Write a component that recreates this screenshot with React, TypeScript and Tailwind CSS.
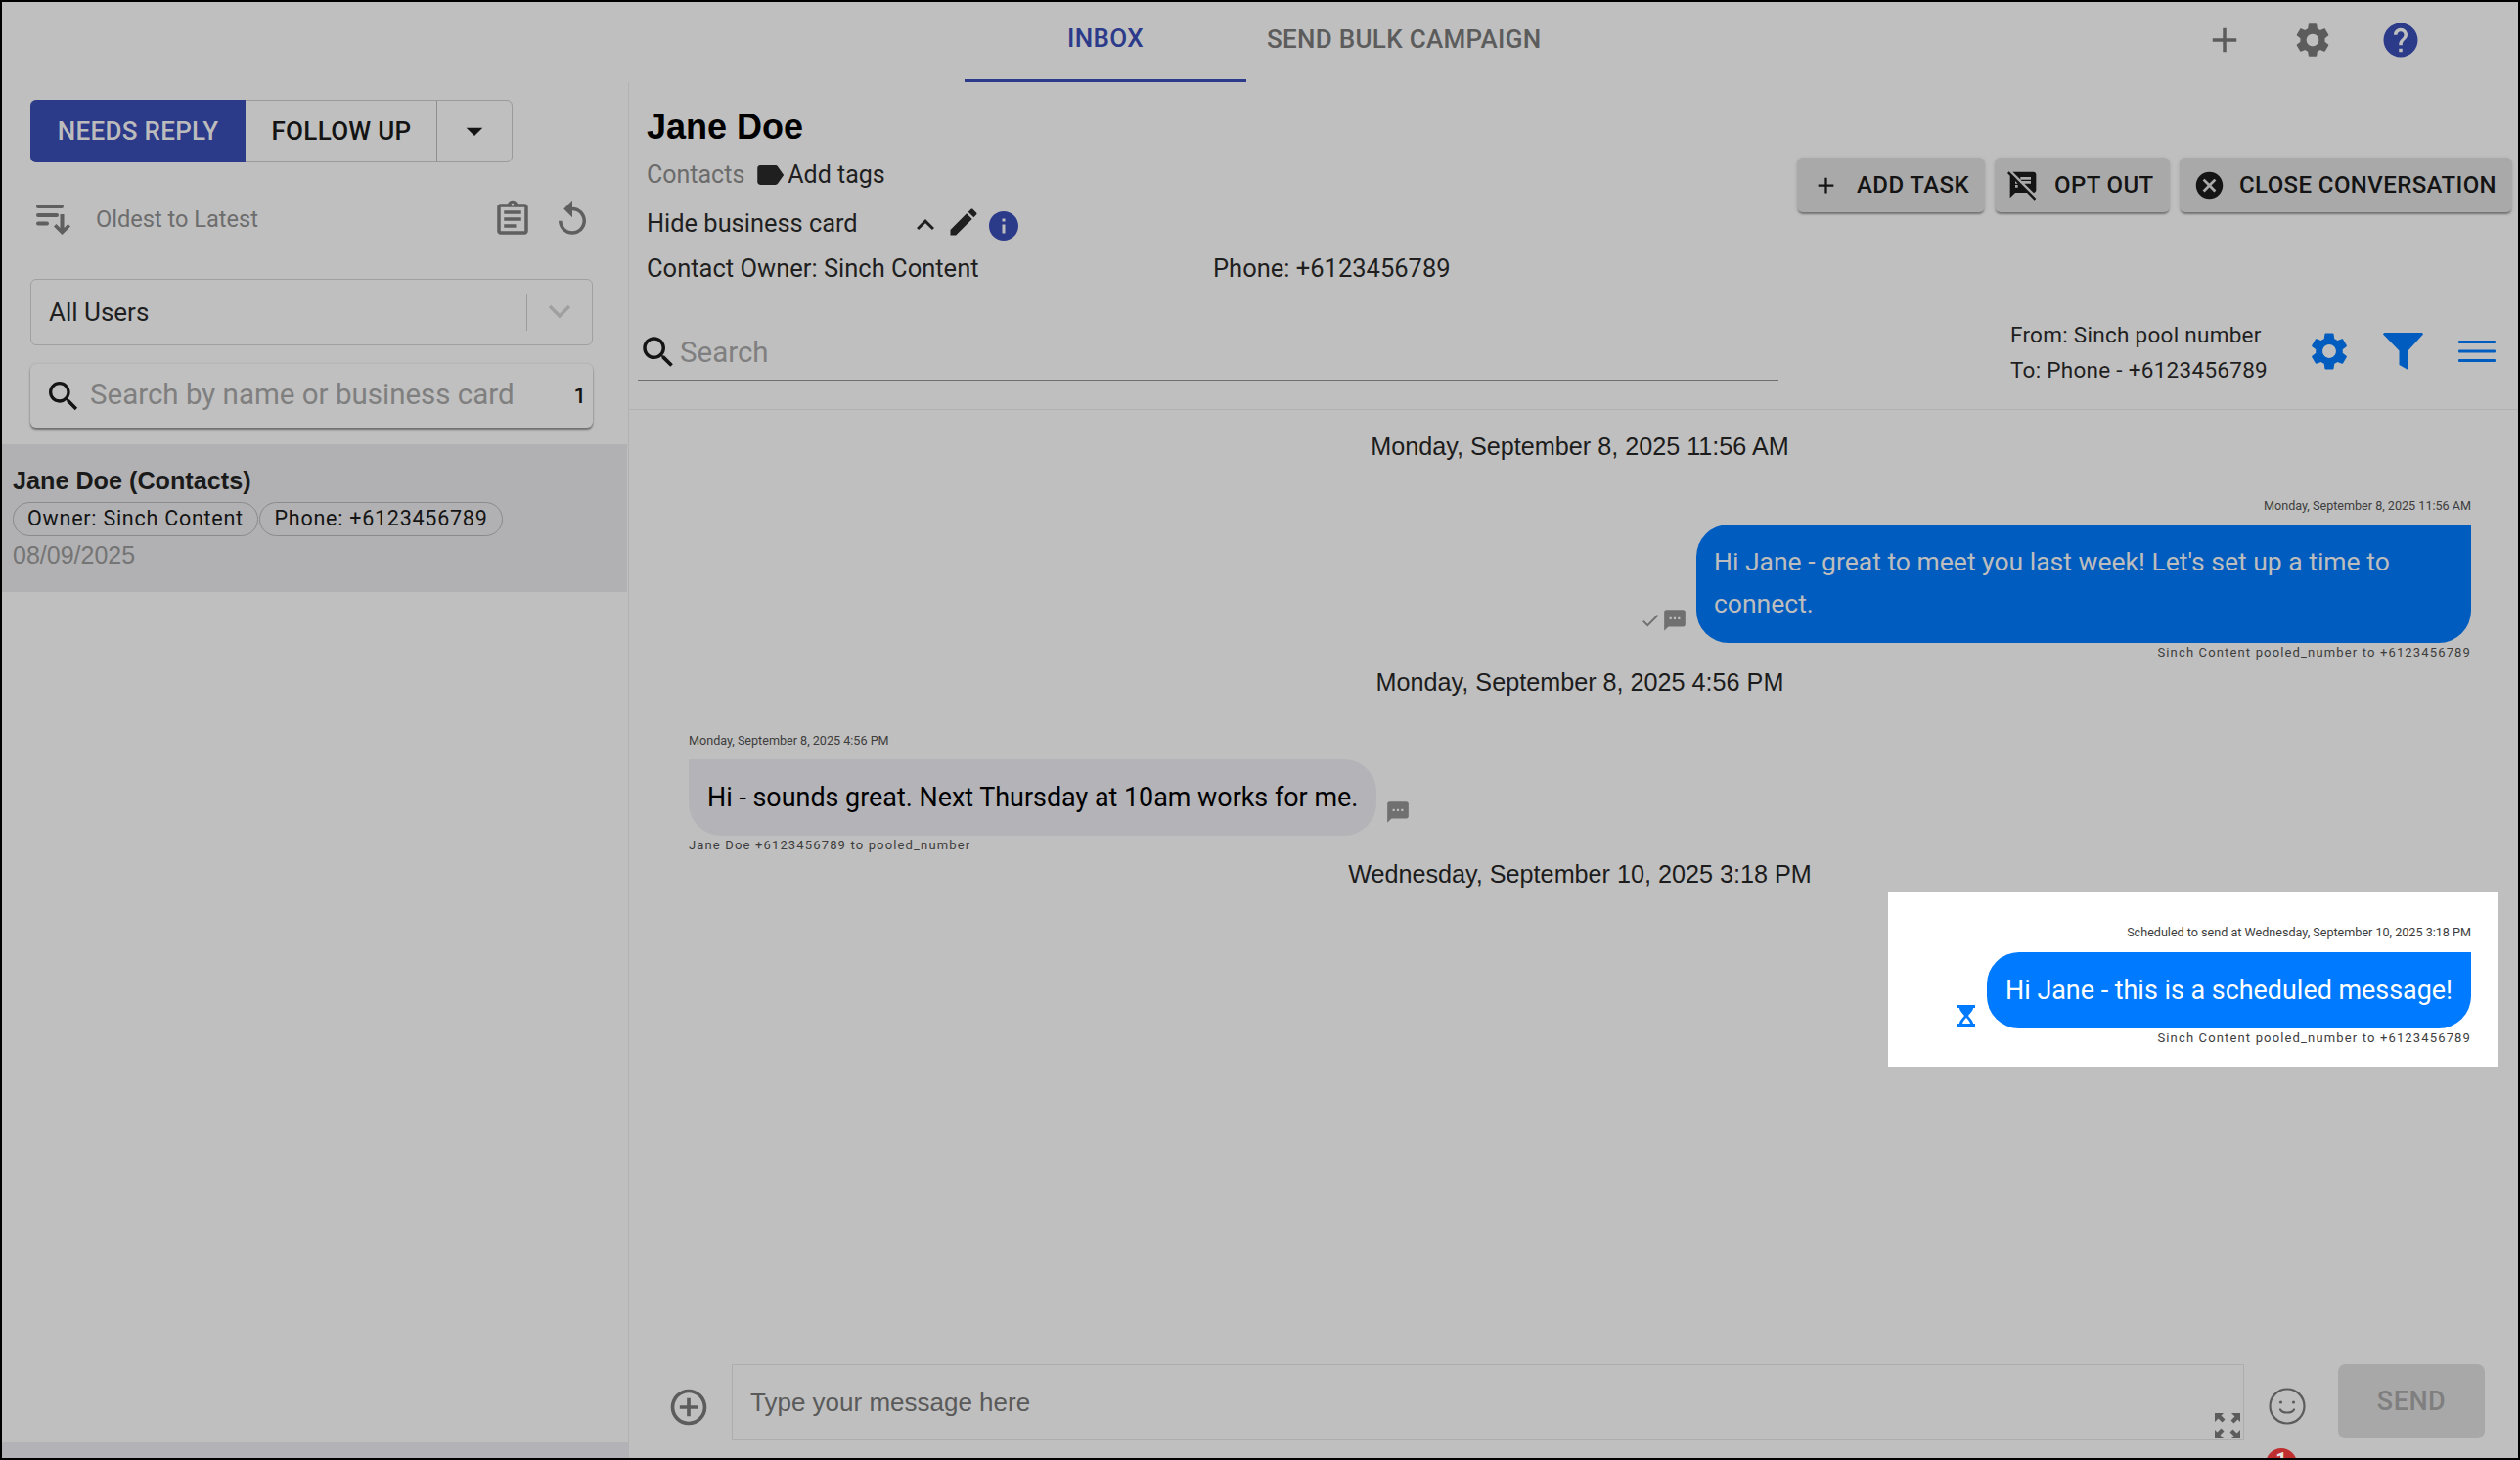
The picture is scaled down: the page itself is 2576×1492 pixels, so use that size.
import type { ReactNode } from "react";

const SANS = "font-['Liberation_Sans',Arial,sans-serif]";

const GEAR =
  "M19.14 12.94c.04-.3.06-.61.06-.94 0-.32-.02-.64-.07-.94l2.03-1.58c.18-.14.23-.41.12-.61l-1.92-3.32c-.12-.22-.37-.29-.59-.22l-2.39.96c-.5-.38-1.03-.7-1.62-.94l-.36-2.54c-.04-.24-.24-.41-.48-.41h-3.84c-.24 0-.43.17-.47.41l-.36 2.54c-.59.24-1.13.57-1.62.94l-2.39-.96c-.22-.08-.47 0-.59.22L2.74 8.87c-.12.21-.08.47.12.61l2.03 1.58c-.05.3-.09.63-.09.94s.02.64.07.94l-2.03 1.58c-.18.14-.23.41-.12.61l1.92 3.32c.12.22.37.29.59.22l2.39-.96c.5.38 1.03.7 1.62.94l.36 2.54c.05.24.24.41.48.41h3.84c.24 0 .44-.17.47-.41l.36-2.54c.59-.24 1.13-.56 1.62-.94l2.39.96c.22.08.47 0 .59-.22l1.92-3.32c.12-.22.07-.47-.12-.61l-2.01-1.58zM12 15.6c-1.98 0-3.6-1.62-3.6-3.6s1.62-3.6 3.6-3.6 3.6 1.62 3.6 3.6-1.62 3.6-3.6 3.6z";
const SEARCH =
  "M15.5 14h-.79l-.28-.27C15.41 12.59 16 11.11 16 9.5 16 5.91 13.09 3 9.5 3S3 5.91 3 9.5 5.91 16 9.5 16c1.61 0 3.09-.59 4.23-1.57l.27.28v.79l5 4.99L20.49 19l-4.99-5zm-6 0C7.01 14 5 11.99 5 9.5S7.01 5 9.5 5 14 7.01 14 9.5 11.99 14 9.5 14z";
const COMMENT =
  "M20 2H4c-1.1 0-2 .9-2 2v18l4-4h14c1.1 0 2-.9 2-2V4c0-1.1-.9-2-2-2zM9 11H7V9h2v2zm4 0h-2V9h2v2zm4 0h-2V9h2v2z";

function Icon({ d, className }: { d: string; className: string }) {
  return (
    <svg viewBox="0 0 24 24" fill="currentColor" className={className}>
      <path d={d} />
    </svg>
  );
}

function ActionButton({ icon, label, className }: { icon: ReactNode; label: string; className: string }) {
  return (
    <button
      type="button"
      className={`flex h-[56px] items-center whitespace-nowrap rounded-[6px] bg-[#a9a9a9] text-[24px] font-medium tracking-[0.4px] text-[#141414] shadow-[0_3px_2px_-1px_rgba(0,0,0,0.35),0_1px_4px_rgba(0,0,0,0.12)] ${className}`}
    >
      {icon}
      {label}
    </button>
  );
}

function DateLine({ text, className = "" }: { text: string; className?: string }) {
  return <div className={`h-[36px] text-center text-[25.2px] leading-[36px] text-[#1c1c1c] ${SANS} ${className}`}>{text}</div>;
}

function Stamp({ children }: { children: ReactNode }) {
  return <div className="h-[20px] text-[12.6px] leading-[20px] text-[#3d3d3d]">{children}</div>;
}

function Route({ children }: { children: ReactNode }) {
  return <div className="h-[20px] text-[13px] leading-[20px] tracking-[1.15px] text-[#3d3d3d]">{children}</div>;
}

export default function App() {
  return (
    <div className="flex h-[1492px] w-[2576px] flex-col overflow-hidden border-2 border-black bg-[#bfbfbf] font-['Roboto',Arial,sans-serif]">
      {/* top tabs */}
      <div className="flex h-[82px] shrink-0 items-start">
        <div className="ml-[984px] flex h-[82px] w-[288px] items-center justify-center border-b-[3px] border-[#2c3a8a] pb-[5px] text-[26px] font-medium tracking-[0.3px] text-[#2c3a8a]">
          INBOX
        </div>
        <div className="ml-[21px] flex h-[82px] items-center pb-[5px] text-[26px] font-medium tracking-[0.3px] text-[#5c5c5c]">
          SEND BULK CAMPAIGN
        </div>
        <div className="ml-auto mr-[99px] flex items-center pt-[18px]">
          <Icon d="M19 13h-6v6h-2v-6H5v-2h6V5h2v6h6v2z" className="h-[42px] w-[42px] text-[#5c5c5c]" />
          <Icon d={GEAR} className="ml-[48px] h-[42px] w-[42px] text-[#5c5c5c]" />
          <Icon
            d="M12 2C6.48 2 2 6.48 2 12s4.48 10 10 10 10-4.48 10-10S17.52 2 12 2zm1 17h-2v-2h2v2zm2.07-7.75l-.9.92C13.45 12.9 13 13.5 13 15h-2v-.5c0-1.1.45-2.1 1.17-2.83l1.24-1.26c.37-.36.59-.86.59-1.41 0-1.1-.9-2-2-2s-2 .9-2 2H8c0-2.21 1.79-4 4-4s4 1.79 4 4c0 .88-.36 1.68-.93 2.25z"
            className="ml-[48px] h-[42px] w-[42px] text-[#2c3a8a]"
          />
        </div>
      </div>

      <div className="flex min-h-0 flex-1">
        {/* sidebar */}
        <aside className="flex w-[641px] shrink-0 flex-col border-r border-[#b2b2b2]">
          <div className="px-[29px] pt-[18px]">
            <div className="flex h-[64px] w-[493px] rounded-[6px] border border-[#9a9a9a] text-[26px] font-medium tracking-[0.3px]">
              <div className="-m-px flex w-[220px] items-center justify-center rounded-l-[6px] bg-[#2c3a8a] text-[#bcbcbc]">NEEDS REPLY</div>
              <div className="flex w-[197px] items-center justify-center border-r border-[#8f8f8f] pl-[2px] text-[#141414]">FOLLOW UP</div>
              <div className="flex flex-1 items-center justify-center">
                <Icon d="M7 10l5 5 5-5z" className="h-[40px] w-[40px] text-[#141414]" />
              </div>
            </div>

            <div className="mt-[36px] flex h-[44px] items-center">
              <svg viewBox="0 0 36 34" fill="#5f5f5f" className="ml-[6px] h-[34px] w-[36px]">
                <rect x="0" y="2" width="28" height="4" rx="2" />
                <rect x="0" y="11" width="23" height="4" rx="2" />
                <rect x="0" y="19.500" width="13" height="4" rx="2" />
                <path d="M24.500 12h4v14l4-4 2.500 2.500L26.500 33 18 24.500 20.500 22l4 4z" />
              </svg>
              <span className="ml-[25px] mt-[2px] text-[23.6px] text-[#6d6d6d]">Oldest to Latest</span>
              <Icon
                d="M19 3h-4.18C14.4 1.84 13.3 1 12 1c-1.3 0-2.4.84-2.82 2H5c-1.1 0-2 .9-2 2v14c0 1.1.9 2 2 2h14c1.1 0 2-.9 2-2V5c0-1.1-.9-2-2-2zm-7-.25c.41 0 .75.34.75.75s-.34.750-.75.75-.75-.34-.75-.75.34-.75.75-.75zM19 19H5V5h14v14zM7 15h7v2H7zm0-4h10v2H7zm0-4h10v2H7z"
                className="ml-auto mr-[19px] h-[42px] w-[42px] text-[#5f5f5f]"
              />
              <Icon
                d="M12 5V1L7 6l5 5V7c3.31 0 6 2.69 6 6s-2.690 6-6 6-6-2.690-6-6H4c0 4.420 3.58 8 8 8s8-3.580 8-8-3.580-8-8-8z"
                className="mr-[7px] h-[42px] w-[42px] text-[#5f5f5f]"
              />
            </div>

            <div className="mt-[39px] flex h-[68px] w-[575px] items-center rounded-[6px] border border-[#a0a0a0] pl-[18px] text-[26px] text-[#1f1f1f]">
              All Users
              <span className="ml-auto h-[38px] w-px bg-[#9c9c9c]" />
              <svg viewBox="0 0 24 16" fill="none" stroke="#a0a0a0" strokeWidth="3.400" className="mx-[20px] h-[16px] w-[26px]">
                <path d="M2 2l10 10L22 2" />
              </svg>
            </div>

            <div className="mt-[19px] flex h-[65px] w-[575px] items-center rounded-[6px] bg-[#c0c0c0] pl-[14px] shadow-[0_2px_2px_rgba(0,0,0,0.4),0_0_3px_rgba(0,0,0,0.12)]">
              <Icon d={SEARCH} className="h-[40px] w-[40px] text-[#141414]" />
              <span className="-mt-[2px] ml-[7px] text-[29.5px] text-[#7f7f7f]">Search by name or business card</span>
              <span className="ml-auto mr-[7px] text-[22px] font-medium text-[#141414]">1</span>
            </div>
          </div>

          <div className="mt-[17px] h-[151px] w-[639px] bg-[#b1b1b3] pl-[11px] pt-[20px]">
            <div className={`h-[34px] text-[25.2px] font-bold leading-[34px] text-[#1a1a1a] ${SANS}`}>Jane Doe (Contacts)</div>
            <div className="mt-[5px] flex gap-[1px]">
              <span className="flex h-[35px] w-[251px] items-center justify-center rounded-full border border-[#8a8a8a] text-[21.500px] tracking-[0.75px] text-[#141414]">
                Owner: Sinch Content
              </span>
              <span className="flex h-[35px] w-[249px] items-center justify-center rounded-full border border-[#8a8a8a] text-[21.500px] tracking-[0.75px] text-[#141414]">
                Phone: +6123456789
              </span>
            </div>
            <div className={`mt-[2px] h-[34px] text-[25px] leading-[34px] text-[#757575] ${SANS}`}>08/09/2025</div>
          </div>
          <div className="mt-auto h-[16px] bg-[#b3b3b7]" />
        </aside>

        {/* conversation */}
        <main className="flex min-w-0 flex-1 flex-col">
          <header className="h-[335px] shrink-0 border-b border-[#b2b2b2]">
            <div className="flex h-[216px]">
              <div className="pl-[18px] pt-[24px]">
                <div className={`h-[44px] text-[36px] font-bold leading-[44px] text-black ${SANS}`}>Jane Doe</div>
                <div className="mt-[11px] flex h-[32px] items-center text-[25px]">
                  <span className="text-[#6b6b6b]">Contacts</span>
                  <Icon
                    d="M17.63 5.840C17.27 5.330 16.670 5 16 5L5 5.010C3.900 5.010 3 5.900 3 7v10c0 1.100.9 1.990 2 1.990L16 19c.67 0 1.270-.33 1.630-.84L22 12l-4.370-6.160z"
                    className="ml-[9px] h-[34px] w-[34px] text-[#1f1f1f]"
                  />
                  <span className="ml-[1px] text-[#1f1f1f]">Add tags</span>
                </div>
                <div className="mt-[17px] flex h-[32px] items-center text-[25.4px] text-[#1f1f1f]">
                  Hide business card
                  <Icon d="M12 8l-6 6 1.410 1.410L12 10.830l4.590 4.580L18 14z" className="ml-[51px] mt-[4px] h-[36px] w-[36px]" />
                  <Icon
                    d="M3 17.250V21h3.750L17.810 9.940l-3.750-3.750L3 17.250zM20.710 7.040c.39-.39.39-1.020 0-1.410l-2.340-2.340c-.39-.39-1.020-.39-1.410 0l-1.830 1.830 3.750 3.750 1.830-1.830z"
                    className="-mt-[3px] ml-[3px] h-[36px] w-[36px]"
                  />
                  <Icon
                    d="M12 2C6.480 2 2 6.480 2 12s4.480 10 10 10 10-4.480 10-10S17.520 2 12 2zm1 15h-2v-6h2v6zm0-8h-2V7h2v2z"
                    className="ml-[5px] mt-[5px] h-[36px] w-[36px] text-[#2c3a8a]"
                  />
                </div>
                <div className="mt-[14px] flex h-[32px] items-center text-[25.5px] text-[#1f1f1f]">
                  <span className="w-[579px]">Contact Owner: Sinch Content</span>
                  <span>Phone: +6123456789</span>
                </div>
              </div>
              <div className="ml-auto flex gap-[10px] pr-[6px] pt-[77px]">
                <ActionButton
                  label="ADD TASK"
                  className="w-[192px] pl-[16px]"
                  icon={<Icon d="M19 13h-6v6h-2v-6H5v-2h6V5h2v6h6v2z" className="mr-[18px] h-[27px] w-[27px]" />}
                />
                <ActionButton
                  label="OPT OUT"
                  className="w-[179px] pl-[13px]"
                  icon={
                    <Icon
                      d="M10.540 11l-.54-.54L7.540 8 6 6.460 2.380 2.840 1.270 1.730 0 3l2.010 2.010L2 22l4-4h9l5.730 5.730L22 22.460 17.540 18l-7-7zM8 14H6v-2h2v2zm-2-3V9l2 2H6zm14-9H4.080L10 7.920V6h8v2h-7.920l1 1H18v2h-4.920l6.990 6.990C21.140 17.950 22 17.080 22 16V4c0-1.100-.9-2-2-2z"
                      className="mr-[16px] h-[32px] w-[32px]"
                    />
                  }
                />
                <ActionButton
                  label="CLOSE CONVERSATION"
                  className="w-[340px] pl-[14px]"
                  icon={
                    <Icon
                      d="M12 2C6.470 2 2 6.470 2 12s4.470 10 10 10 10-4.470 10-10S17.530 2 12 2zm5 13.590L15.590 17 12 13.410 8.410 17 7 15.590 10.590 12 7 8.410 8.410 7 12 10.590 15.590 7 17 8.410 13.410 12 17 15.590z"
                      className="mr-[14px] h-[33px] w-[33px]"
                    />
                  }
                />
              </div>
            </div>
            <div className="flex h-[118px]">
              <div className="ml-[9px] mt-[30px] flex h-[59px] w-[1166px] items-center border-b-[1.500px] border-[#6e6e6e]">
                <Icon d={SEARCH} className="mt-[2px] h-[42px] w-[42px] text-[#141414]" />
                <span className="ml-[1px] mt-[2px] text-[29.5px] text-[#7f7f7f]">Search</span>
              </div>
              <div className="ml-[237px] pt-[24px] text-[22.500px] leading-[36px] tracking-[0.28px] text-[#1f1f1f]">
                <div>From: Sinch pool number</div>
                <div>To: Phone - +6123456789</div>
              </div>
              <div className="ml-auto flex items-start pr-[23px] pt-[36px]">
                <Icon d={GEAR} className="h-[46px] w-[46px] text-[#005cbf]" />
                <svg viewBox="0 0 41 38" fill="#005cbf" className="ml-[32px] mt-[4px] h-[38px] w-[41px]">
                  <path d="M1 0h39l1 1.500-15.500 17V38l-9-5V18.500L0 1.500z" />
                </svg>
                <svg viewBox="0 0 38 22" fill="#005cbf" className="ml-[36px] mt-[12px] h-[22px] w-[38px]">
                  <rect width="38" height="3" rx="1" />
                  <rect y="9.500" width="38" height="3" rx="1" />
                  <rect y="19" width="38" height="3" rx="1" />
                </svg>
              </div>
            </div>
          </header>

          {/* messages */}
          <section className="min-h-0 flex-1 pl-[33px] pr-[20px] pt-[19px]">
            <DateLine text="Monday, September 8, 2025 11:56 AM" />
            <div className="mt-[33px] flex flex-col items-end pr-[28px]">
              <Stamp>Monday, September 8, 2025 11:56 AM</Stamp>
              <div className="relative mt-[9px] w-[792px] rounded-[33px] rounded-tr-none bg-[#005cbf] px-[18px] py-[2px] text-[26.500px] leading-[43px] text-[#bdbdbd]">
                <div className="pt-[14px] pb-[17px]">Hi Jane - great to meet you last week! Let's set up a time to connect.</div>
                <div className="absolute -left-[58px] bottom-[10px] flex items-center">
                  <Icon d="M9 16.170L4.830 12l-1.420 1.410L9 19 21 7l-1.410-1.410z" className="h-[22px] w-[22px] text-[#707070]" />
                  <Icon d={COMMENT} className="ml-[1px] h-[26px] w-[26px] text-[#707070]" />
                </div>
              </div>
              <Route>Sinch Content pooled_number to +6123456789</Route>
            </div>

            <DateLine text="Monday, September 8, 2025 4:56 PM" className="mt-[2px]" />
            <div className="mt-[32px] flex flex-col items-start pl-[28px]">
              <Stamp>Monday, September 8, 2025 4:56 PM</Stamp>
              <div className="mt-[9px] flex items-end">
                <div className="flex h-[78px] items-center rounded-[33px] rounded-tl-none bg-[#b4b4b8] px-[19px] text-[26.9px] text-black">
                  Hi - sounds great. Next Thursday at 10am works for me.
                </div>
                <Icon d={COMMENT} className="mb-[11px] ml-[9px] h-[26px] w-[26px] text-[#707070]" />
              </div>
              <Route>Jane Doe +6123456789 to pooled_number</Route>
            </div>

            <DateLine text="Wednesday, September 10, 2025 3:18 PM" className="mt-px" />
            <div className="ml-auto mt-px flex h-[178px] w-[624px] flex-col items-end bg-white pr-[28px] pt-[31px]">
              <Stamp>Scheduled to send at Wednesday, September 10, 2025 3:18 PM</Stamp>
              <div className="relative mt-[10px] flex h-[78px] items-center rounded-[33px] rounded-tr-none bg-[#007aff] px-[19px] text-[26.9px] text-white">
                Hi Jane - this is a scheduled message!
                <svg viewBox="0 0 18 22" className="absolute -left-[30px] bottom-[2px] h-[22px] w-[18px]" fill="#007aff" fillRule="evenodd">
                  <path d="M0 0h18v3h-2c0 3-3 5-5 8 2 3 5 5 5 8h2v3H0v-3h2c0-3 3-5 5-8-2-3-5-5-5-8H0zM9 13c-1.500 1.500-3.500 3.500-4 6h8c-.5-2.500-2.500-4.500-4-6z" />
                </svg>
              </div>
              <Route>Sinch Content pooled_number to +6123456789</Route>
            </div>
          </section>

          {/* composer */}
          <footer className="relative flex h-[115px] shrink-0 items-start border-t border-[#b2b2b2] pt-[18px]">
            <Icon
              d="M13 7h-2v4H7v2h4v4h2v-4h4v-2h-4V7zm-1-5C6.480 2 2 6.480 2 12s4.480 10 10 10 10-4.480 10-10S17.520 2 12 2zm0 18c-4.410 0-8-3.590-8-8s3.590-8 8-8 8 3.590 8 8-3.590 8-8 8z"
              className="ml-[39px] mt-[22px] h-[44px] w-[44px] text-[#5c5c5c]"
            />
            <div className="ml-[22px] flex h-[78px] w-[1546px] items-center border border-[#adadad] pl-[18px] pr-[3px]">
              <span className={`text-[26px] text-[#5a5a5a] ${SANS}`}>Type your message here</span>
              <svg viewBox="0 0 26 26" fill="#5c5c5c" className="ml-auto mt-[48px] h-[26px] w-[26px]">
                <path d="M0 0h9L6.500 2.500l4 4-3 3-4-4L0 9zM26 0v9l-2.500-2.500-4 4-3-3 4-4L17 0zM0 26v-9l2.500 2.500 4-4 3 3-4 4L9 26zM26 26h-9l2.500-2.500-4-4 3-3 4 4L26 17z" />
              </svg>
            </div>
            <svg viewBox="0 0 38 38" fill="none" stroke="#5c5c5c" strokeWidth="2.200" className="ml-[25px] mt-[24px] h-[38px] w-[38px]">
              <circle cx="19" cy="19" r="17.500" />
              <circle cx="12.500" cy="15" r="1.600" fill="#5c5c5c" stroke="none" />
              <circle cx="25.500" cy="15" r="1.600" fill="#5c5c5c" stroke="none" />
              <path d="M12 22.500c2 4 12 4 14 0" strokeLinecap="round" />
            </svg>
            <button
              type="button"
              className="ml-[33px] flex h-[76px] w-[150px] items-center justify-center rounded-[8px] bg-[#a8a8a8] text-[27px] font-medium tracking-[0.5px] text-[#7f7f7f]"
            >
              SEND
            </button>
            <span className="absolute left-[1673px] top-[104px] flex h-[32px] w-[32px] justify-center rounded-full bg-[#bf2f2f] text-[20px] font-bold leading-[24px] text-[#e6e6e6]">
              1
            </span>
          </footer>
        </main>
      </div>
    </div>
  );
}
